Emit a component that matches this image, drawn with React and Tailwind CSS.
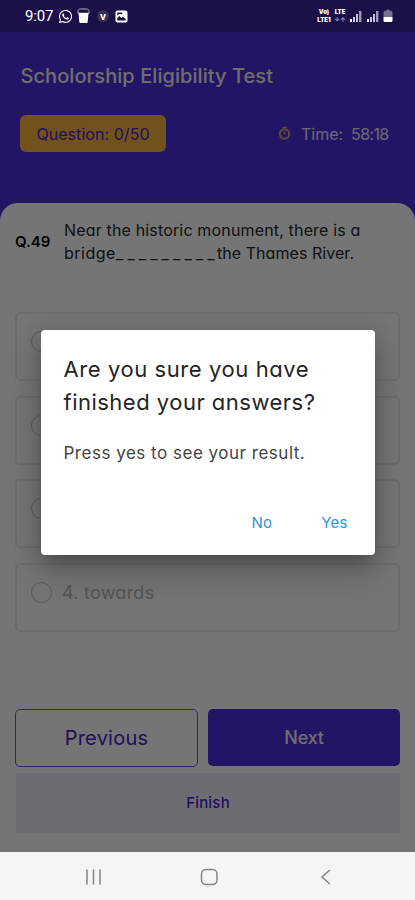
import { FaWhatsapp } from 'react-icons/fa';

const options = [
    { id: 1, label: '' },
    { id: 2, label: '' },
    { id: 3, label: '' },
    { id: 4, label: '4. towards' },
];

function Signal() {
    return (
        <svg width="12" height="12" viewBox="0 0 12 12" fill="#c9c5dc">
            <rect x="0" y="9" width="2" height="3" fill="#fff" />
            <rect x="3" y="7" width="2" height="5" />
            <rect x="6" y="4" width="2" height="8" />
            <rect x="9" y="1" width="2.4" height="11" opacity="0.75" />
        </svg>
    );
}

function StatusBar() {
    return (
        <div className="flex h-8 shrink-0 items-center justify-between bg-[#1b1148] pl-[25px] pr-[22px] text-white">
            <div className="flex items-center">
                <span className="w-[33px] whitespace-nowrap font-[Roboto] text-[15px] tracking-[-0.2px]">9:07</span>
                <FaWhatsapp className="h-[15px] w-[15px]" />
                {/* Glass */}
                <svg className="ml-[4px]" width="13" height="16" viewBox="0 0 13 16">
                    <path d="M1 3.500C1 2 2 1 3.500 1h6C11 1 12 2 12 3.500v1.700H1z" fill="none" stroke="#b5b0c9" />
                    <path d="M1.500 5h10l-.8 8.800a1.200 1.200 0 0 1-1.200 1.200h-6a1.200 1.200 0 0 1-1.200-1.200z" fill="#fff" />
                </svg>
                <span className="ml-[7px] flex h-[12px] w-[12px] items-center justify-center rounded-full bg-[#37324f] text-[10px] font-bold leading-[12px]">v</span>
                {/* Gallery */}
                <svg className="ml-[6px]" width="13" height="13" viewBox="0 0 13 13">
                    <rect x="0.500" y="0.500" width="12" height="12" rx="2" fill="#fff" />
                    <path d="M2.300 10.500V8l2-2 2 2 1.500-1.300L10.700 9v1.500z" fill="#1b1148" />
                    <path d="M2.300 2.500h5v1.500h-3l-2 1.500z" fill="#1b1148" />
                </svg>
            </div>
            <div className="flex items-center">
                <span className="mr-[1px] flex w-[16px] flex-col text-center text-[6px] font-black leading-[8px]">
                    <span>Vo)</span>
                    <span>LTE1</span>
                </span>
                <span className="flex w-[14px] flex-col text-center text-[6px] font-black leading-[8px]">
                    <span>LTE</span>
                    <span className="text-[#8f88b5]">↓↑</span>
                </span>
                <span className="ml-[3px] flex gap-[5px]">
                    <Signal />
                    <Signal />
                </span>
                <svg className="ml-[4px]" width="10" height="14" viewBox="0 0 10 14">
                    <path d="M3.500 0.500h3v1.300h1.500a1.500 1.500 0 0 1 1.500 1.500V8h-9V3.300A1.500 1.500 0 0 1 2 1.800h1.500z" fill="#77718f" />
                    <path d="M0.500 8h9v3.500a1.500 1.500 0 0 1-1.500 1.500H2a1.500 1.500 0 0 1-1.500-1.500z" fill="#fff" />
                </svg>
            </div>
        </div>
    );
}

function Header() {
    return (
        <div className="h-[171px] px-5 pt-[30px]">
            <h1 className="ml-[0.500px] whitespace-nowrap text-[20px] font-medium leading-[28px] tracking-[0.060px] text-[#f0f0f0]">
                Scholorship Eligibility Test
            </h1>
            <div className="mt-[25px] flex items-center justify-between">
                <div className="flex h-[37px] w-[146px] items-center justify-center whitespace-nowrap rounded-md bg-[#f6b33e] text-[16px] tracking-[0.050px] text-[#4a22d0]">
                    Question: 0/50
                </div>
                <div className="flex items-center pr-[6px] text-[16px] text-[#e8e4ff]">
                    <svg width="13" height="15" viewBox="0 0 13 15" fill="none" stroke="#d6a560" strokeWidth="2">
                        <circle cx="6.500" cy="8" r="4.700" />
                        <path d="M4.500 1.500h4M6.500 5.500V8.500" strokeWidth="1.500" />
                    </svg>
                    <span className="ml-[10px] w-[50px] whitespace-nowrap">Time:</span>
                    <span className="w-[38px] whitespace-nowrap tracking-[-0.600px]">58:18</span>
                </div>
            </div>
        </div>
    );
}

function Question() {
    return (
        <div className="flex h-[109px] pl-[15px] pt-[16px]">
            <div className="w-[49px] pt-[11px] text-[15px] font-semibold leading-[24px] text-black">Q.49</div>
            <div className="whitespace-nowrap text-[16px] leading-[23px] tracking-[0.160px] text-[#26262e]">
                <div>Near the historic monument, there is a</div>
                <div className="flex">
                    <span className="w-[52px] tracking-[0.500px]">bridge</span>
                    <span className="w-[101px] tracking-[4.100px]">_________</span>
                    <span className="tracking-[0.050px]">the Thames River.</span>
                </div>
            </div>
        </div>
    );
}

function Option({ label }) {
    return (
        <div className="flex h-[69px] rounded-[5px] border-2 border-[#ebebeb] pl-[14px] pt-[17px]">
            <span className="h-[21px] w-[21px] rounded-full border-[1.500px] border-[#c0c0c0]" />
            <span className="ml-[10px] text-[18px] leading-[21px] tracking-[0.250px] text-[#b8b8b8]">{label}</span>
        </div>
    );
}

function ConfirmDialog() {
    return (
        <div className="mx-auto h-[225px] w-[334px] rounded-[4px] bg-white px-[23px] pt-[23px] shadow-[0_11px_15px_-7px_rgba(0,0,0,0.2),0_20px_36px_3px_rgba(0,0,0,0.14),0_5px_20px_4px_rgba(0,0,0,0.12)]">
            <div className="whitespace-nowrap text-[22px] leading-[33px] text-[#242424]">
                <div className="tracking-[0.580px]">Are you sure you have</div>
                <div className="tracking-[0.490px]">finished your answers?</div>
            </div>
            <p className="mt-[22px] whitespace-nowrap text-[17px] leading-[24px] tracking-[0.510px] text-[#444]">
                Press yes to see your result.
            </p>
            <div className="mt-[46px] flex justify-end gap-[49px] pr-[4px] text-[15px] leading-[24px] tracking-[0.200px] text-[#2e96d3]">
                <button type="button">No</button>
                <button type="button">Yes</button>
            </div>
        </div>
    );
}

function NavBar() {
    return (
        <div className="flex h-[48px] shrink-0 items-center bg-[#f5f5f5] pl-[85px] pt-[2px] text-[#858585]">
            <svg width="16" height="16" viewBox="0 0 16 16" stroke="currentColor" strokeWidth="1.500">
                <path d="M2 0.500v15M8.500 0.500v15M15 0.500v15" />
            </svg>
            <svg className="ml-[99px]" width="18" height="18" viewBox="0 0 18 18" fill="none" stroke="currentColor" strokeWidth="1.500">
                <rect x="1.500" y="1.500" width="15.500" height="15" rx="4.500" />
            </svg>
            <svg className="ml-[102px]" width="12" height="16" viewBox="0 0 12 16" fill="none" stroke="currentColor" strokeWidth="1.500">
                <path d="M9.800 1L2 8l7.800 7" />
            </svg>
        </div>
    );
}

export default function App() {
    return (
        <div className="flex h-[900px] w-[415px] flex-col overflow-hidden font-[Inter,sans-serif] [font-feature-settings:'cv11']">
            <StatusBar />

            <div className="relative h-[820px] bg-[#4e2edc]">
                <Header />

                <div className="h-[649px] rounded-t-[18px] bg-white">
                    <Question />

                    <div className="flex flex-col gap-[14.700px] px-[15px]">
                        {options.map((option) => (
                            <Option key={option.id} label={option.label} />
                        ))}
                    </div>

                    <div className="mt-[77px] flex gap-[10px] px-[15px]">
                        <button type="button" className="h-[58px] w-[183px] rounded-[5px] border-[1.500px] border-[#7352e0] text-[20px] tracking-[0.250px] text-[#4a22d0]">
                            Previous
                        </button>
                        <button type="button" className="h-[57px] w-[192px] rounded-[5px] bg-[#4e2edc] text-[18px] font-medium tracking-[-0.200px] text-[#efefef]">
                            Next
                        </button>
                    </div>
                    <button type="button" className="mx-4 mt-[6px] h-[60px] w-[384px] bg-[#efecfb] text-[15px] font-medium tracking-[0.200px] text-[#4a22d0]">
                        Finish
                    </button>
                </div>

                {/* Dialog backdrop */}
                <div className="absolute inset-0 bg-black/54 pt-[297.500px]">
                    <ConfirmDialog />
                </div>
            </div>

            <NavBar />
        </div>
    );
}
